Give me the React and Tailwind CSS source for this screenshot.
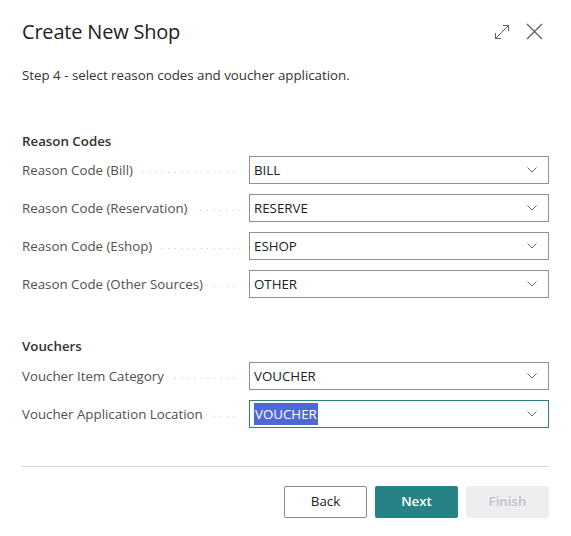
import { useState } from "react";

const reasonRows = [
  { label: "Reason Code (Bill)", value: "BILL" },
  { label: "Reason Code (Reservation)", value: "RESERVE" },
  { label: "Reason Code (Eshop)", value: "ESHOP" },
  { label: "Reason Code (Other Sources)", value: "OTHER" },
];

const voucherRows = [
  { label: "Voucher Item Category", value: "VOUCHER" },
  { label: "Voucher Application Location", value: "VOUCHER", focused: true },
];

const Chevron = () => (
  <svg width="10" height="6" viewBox="0 0 10 6" fill="none" className="shrink-0">
    <path d="M0.5 0.5 L5 5 L9.5 0.5" stroke="#5a6a80" strokeWidth="1" />
  </svg>
);

const FieldRow = ({ label, value, focused }) => (
  <div className="flex items-center h-[28px]">
    {/* label + dotted leader */}
    <div className="flex items-center w-[218px] mr-[9px] shrink-0 pt-[2px]">
      <span className="text-[13.3px] text-[#505050] whitespace-nowrap">{label}</span>
      <span className="flex-1 ml-[8px] h-px mt-[3px] bg-[linear-gradient(to_right,#bdbdbd_1px,transparent_1px)] bg-[length:6.5px_1px] bg-repeat-x bg-right" />
    </div>
    {/* lookup box */}
    <div
      className={
        "flex-1 h-full flex items-center justify-between pl-[4px] pr-[11px] bg-white border " +
        (focused ? "border-[#2b7f7c]" : "border-[#8a8f9a]")
      }
    >
      <span
        className={
          "text-[13.3px] leading-[22px] " +
          (focused ? "bg-[#4f68d6] text-white px-[1px]" : "text-[#212121]")
        }
      >
        {value}
      </span>
      <Chevron />
    </div>
  </div>
);

export default function App() {
  const [step] = useState(4);

  return (
    <div className="w-[571px] h-[536px] bg-white font-['Open_Sans',sans-serif] text-[#212121] px-[22px] flex flex-col">
      {/* HEADER */}
      <div className="flex items-center justify-between h-[62px] pt-[1px]">
        <h1 className="text-[20px] leading-none tracking-[-0.2px] text-[#212121]">Create New Shop</h1>
        <div className="flex items-center gap-[16px] mr-[6px]">
          <svg width="16" height="16" viewBox="0 0 16 16" fill="none" stroke="#616161" strokeWidth="1">
            <path d="M1.5 14.5 L14.5 1.5" />
            <path d="M1.5 9 L1.5 14.5 L7 14.5" />
            <path d="M9 1.5 L14.5 1.5 L14.5 7" />
          </svg>
          <svg width="17" height="17" viewBox="0 0 17 17" fill="none" stroke="#616161" strokeWidth="1.3">
            <path d="M1 1 L16 16 M16 1 L1 16" />
          </svg>
        </div>
      </div>

      {/* STEP TEXT */}
      <p className="text-[13.3px] text-[#323130] mt-[3px] leading-[20px]">
        Step {step} - select reason codes and voucher application.
      </p>

      {/* REASON CODES */}
      <h2 className="text-[13.3px] font-semibold text-[#323130] mt-[46px] leading-[20px]">Reason Codes</h2>
      <div className="flex flex-col gap-[10px] mt-[5px]">
        {reasonRows.map((row) => (
          <FieldRow key={row.label} {...row} />
        ))}
      </div>

      {/* VOUCHERS */}
      <h2 className="text-[13.3px] font-semibold text-[#323130] mt-[38px] leading-[20px]">Vouchers</h2>
      <div className="flex flex-col gap-[10px] mt-[6px]">
        {voucherRows.map((row) => (
          <FieldRow key={row.label} {...row} />
        ))}
      </div>

      {/* FOOTER */}
      <div className="mt-[38px] border-t border-[#d6d6d6]" />
      <div className="flex justify-end gap-[8px] mt-[19px]">
        <button className="w-[83px] h-[32px] rounded-[2px] border border-[#8a8886] bg-white text-[13.3px] text-[#212121]">
          Back
        </button>
        <button className="w-[83px] h-[32px] rounded-[2px] bg-[#278285] text-[13.3px] font-semibold text-white">
          Next
        </button>
        <button className="w-[83px] h-[32px] rounded-[2px] bg-[#eceef0] text-[13.3px] font-semibold text-[#c0c2c6]" disabled>
          Finish
        </button>
      </div>
    </div>
  );
}
